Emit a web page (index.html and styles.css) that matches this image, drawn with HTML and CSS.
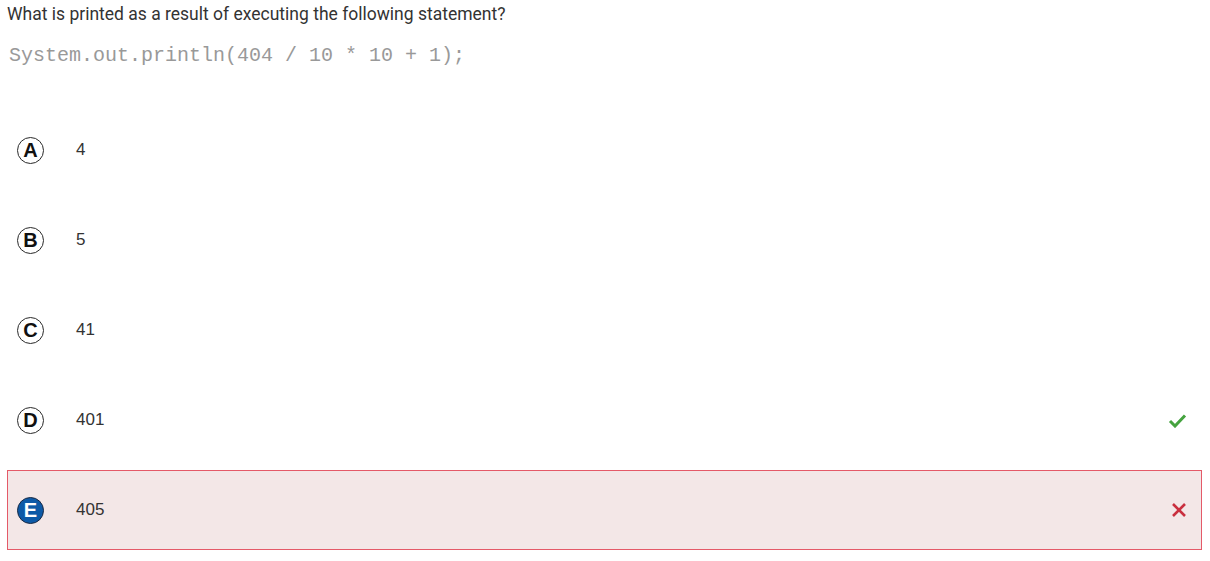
FILE: index.html
```html
<!DOCTYPE html>
<html>
<head>
<meta charset="utf-8">
<link rel="stylesheet" href="styles.css">
</head>
<body>
<div class="page">
  <div class="question">What is printed as a result of executing the following statement?</div>
  <div class="code">System.out.println(404 / 10 * 10 + 1);</div>
  <div class="options">
    <div class="option"><span class="badge">A</span><span class="value">4</span></div>
    <div class="option"><span class="badge">B</span><span class="value">5</span></div>
    <div class="option"><span class="badge">C</span><span class="value">41</span></div>
    <div class="option"><span class="badge">D</span><span class="value">401</span>
      <svg class="mark" width="19" height="15" viewBox="0 0 19 15"><path d="M2 8 L7 13 L17 2.5" fill="none" stroke="#45a33f" stroke-width="3"/></svg>
    </div>
    <div class="option selected"><span class="badge filled">E</span><span class="value">405</span>
      <svg class="mark" width="16" height="16" viewBox="0 0 16 16"><path d="M2 2 L14 14 M14 2 L2 14" fill="none" stroke="#c9303f" stroke-width="2.6"/></svg>
    </div>
  </div>
</div>
</body>
</html>
```

FILE: styles.css
```css
html, body {
  margin: 0;
  padding: 0;
  background: #fff;
}
.page {
  padding: 2px 7px 0 7px;
}
.question {
  font-family: Roboto, "Liberation Sans", sans-serif;
  font-size: 17.5px;
  line-height: 24px;
  color: #333;
}
.code {
  font-family: "Liberation Mono", "Courier New", monospace;
  font-size: 20px;
  line-height: 24px;
  color: #999;
  margin-top: 18px;
  padding-left: 2px;
}
.options {
  margin-top: 42px;
  display: flex;
  flex-direction: column;
  gap: 10px;
  width: 1195px;
}
.option {
  height: 80px;
  box-sizing: border-box;
  display: flex;
  align-items: center;
  padding-left: 9px;
  padding-right: 14px;
  border: 1px solid transparent;
}
.option.selected {
  background: #f3e7e7;
  border-color: #e45a68;
}
.badge {
  width: 27px;
  height: 27px;
  box-sizing: border-box;
  border: 1.3px solid #2a2a2a;
  border-radius: 50%;
  display: flex;
  align-items: center;
  justify-content: center;
  font-family: "Liberation Sans", Arial, sans-serif;
  font-weight: bold;
  font-size: 20px;
  line-height: 1;
  color: #111;
  flex: none;
}
.badge.filled {
  background: #0d5aa7;
  border-color: #1a2a44;
  color: #fff;
}
.value {
  margin-left: 32px;
  font-family: "Liberation Sans", Arial, sans-serif;
  font-size: 17px;
  color: #333;
  flex: 1;
}
.mark {
  flex: none;
}
```
